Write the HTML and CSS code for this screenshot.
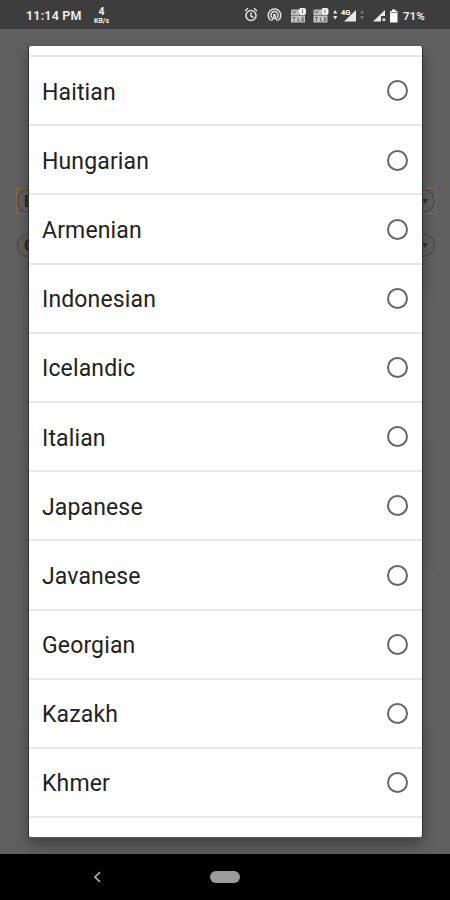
FILE: index.html
```html
<!DOCTYPE html>
<html lang="en">
<head>
<meta charset="utf-8">
<title>Language selection</title>
<link rel="stylesheet" href="styles.css">
</head>
<body>
<div class="screen">
  <header class="status">
    <span class="time">11:14 PM</span>
    <span class="speed"><b>4</b><small>KB/s</small></span>
    <svg class="icons" width="156" height="20" viewBox="0 0 156 20" fill="none" stroke="#e0e0e0">
      <circle cx="7" cy="10.500" r="5" stroke-width="1.600"/>
      <path d="M1 6l3-2.700M13 6l-3-2.700M7 7.500v3.500l2.500 1.500" stroke-width="1.500"/>
      <path d="M26.500 15.200a6.300 6.300 0 1 1 8 0M28 12.800a3.600 3.600 0 1 1 5 0" stroke-width="1.500"/>
      <path d="M30.500 10l-3 6M30.500 10l3 6M28.800 13.500h3.400" stroke-width="1.300"/>
      <circle cx="30.500" cy="10" r="1.300" fill="#e0e0e0" stroke="none"/>
      <g id="volte" stroke="none" fill="#c4c4c4">
        <path d="M47 4.500h8v5.500h-8zM47 10.500h14v7h-14z"/>
        <path d="M48 5.500l2 3 2-3M48.500 12.500h3M50 12.500v4M54 12.500v3.500h2M60 12.500h-2v3.500h2M58 14.500h2" stroke="#555" stroke-width=".8" fill="none"/>
        <rect x="55" y="3" width="7" height="7" rx="2" fill="#f4f4f4"/>
        <path d="M58.500 4.500v4" stroke="#777"/>
      </g>
      <use href="#volte" x="22.500"/>
      <g stroke="none" fill="#e8e8e8">
        <path d="M89 8.500l2.200-3.500 2.200 3.500zM89 11h4.400l-2.200 3.500z"/>
        <path d="M100 16.500h12V5z"/>
        <path d="M116 8.500l2-3.500 2 3.500zM116 11h4l-2 3.500z" fill="#777"/>
        <path d="M129 16.500l12-11.500v6h-4v5.500z"/>
        <path d="M138.500 13.500h2.800v2.500h-2.800z"/>
        <path d="M146 6h2V4.500h3.500V6h2v11.500h-7.500z" fill="#fff"/>
      </g>
      <path d="M146.500 7.500h6.500" stroke="#888"/>
      <text class="net" x="97" y="10">4G</text>
    </svg>
    <span class="percent">71%</span>
  </header>
  <main class="page">
    <div class="card first"></div>
    <div class="card second"></div>
    <div class="select active"><span class="pill"><b>E</b><i></i></span></div>
    <div class="select"><span class="pill"><b>G</b><i></i></span></div>
    <section class="dialog">
      <ul class="list">
        <li class="row"><span>Haitian</span><i class="radio"></i></li>
        <li class="row"><span>Hungarian</span><i class="radio"></i></li>
        <li class="row"><span>Armenian</span><i class="radio"></i></li>
        <li class="row"><span>Indonesian</span><i class="radio"></i></li>
        <li class="row"><span>Icelandic</span><i class="radio"></i></li>
        <li class="row"><span>Italian</span><i class="radio"></i></li>
        <li class="row"><span>Japanese</span><i class="radio"></i></li>
        <li class="row"><span>Javanese</span><i class="radio"></i></li>
        <li class="row"><span>Georgian</span><i class="radio"></i></li>
        <li class="row"><span>Kazakh</span><i class="radio"></i></li>
        <li class="row"><span>Khmer</span><i class="radio"></i></li>
      </ul>
    </section>
  </main>
  <nav class="nav">
    <svg width="10" height="12" viewBox="0 0 10 12" fill="none" stroke="#aaa" stroke-width="1.700"><path d="M8 1.200L3 6l5 4.800"/></svg>
    <span class="home"></span>
  </nav>
</div>
</body>
</html>
```
FILE: styles.css
```css
* { box-sizing: border-box; }
body { margin: 0; font-family: Roboto, "Liberation Sans", sans-serif; }
.screen { width: 450px; height: 900px; display: flex; flex-direction: column; overflow: hidden; background: #606060; }
.status { height: 29px; flex: none; background: #3d3d3d; color: #f0f0f0; display: flex; align-items: center; padding: 1px 0 0 26px; }
.time { width: 67px; font-size: 12.5px; font-weight: 600; letter-spacing: .2px; white-space: nowrap; padding-top: 1px; }
.speed { width: 17px; display: flex; flex-direction: column; align-items: center; font-size: 10.5px; }
.speed b { line-height: 11px; }
.speed small { font-size: 7px; font-weight: 700; line-height: 8px; }
.icons { margin-left: 134px; flex: none; }
.net { font: 700 7.5px Roboto, sans-serif; fill: #fff; stroke: none; }
.percent { margin-left: 3px; padding-top: 1px; font-size: 11.5px; font-weight: 600; }
.page { position: relative; flex: 1; padding-top: 159px; background: #606060; }
.card { position: absolute; left: 15px; right: 15px; border-radius: 15px; background: #626262; }
.first { top: 260px; height: 155px; }
.second { top: 533px; height: 170px; }
.select { position: relative; height: 26px; margin: 0 14px 18px 16px; border: 1px solid transparent; }
.active { border-color: #8a6745; }
.pill { display: flex; height: 24px; align-items: center; justify-content: space-between; padding: 0 6px; border: 1px solid #444; border-radius: 12px; color: #292929; font-size: 16px; }
.pill i { border: 3px solid transparent; border-top: 5px solid #333; border-bottom: 0; }
.dialog { position: absolute; left: 28px; top: 16px; width: 395px; height: 793px; padding-top: 9px; background: #fff; border: 1px solid #303030; border-top-color: #585858; border-bottom-color: #585858; border-radius: 3px; box-shadow: 0 7px 14px rgba(0,0,0,.32); overflow: hidden; }
.list { margin: 0; padding: 0; list-style: none; border-top: 2px solid #e8e8e8; }
.row { height: 69.2px; padding: 1px 14px 0 13px; display: flex; align-items: center; justify-content: space-between; border-bottom: 2px solid #e8e8e8; color: #222; font-size: 23px; letter-spacing: .14px; }
.row span { padding-top: 2px; }
.radio { width: 21px; height: 21px; border: 2px solid #666; border-radius: 50%; margin-bottom: .5px; }
.nav { height: 46px; flex: none; display: flex; align-items: center; padding-left: 92px; background: #000; }
.home { width: 30px; height: 12px; margin-left: 108px; border-radius: 6px; background: #9b9b9b; }
```
